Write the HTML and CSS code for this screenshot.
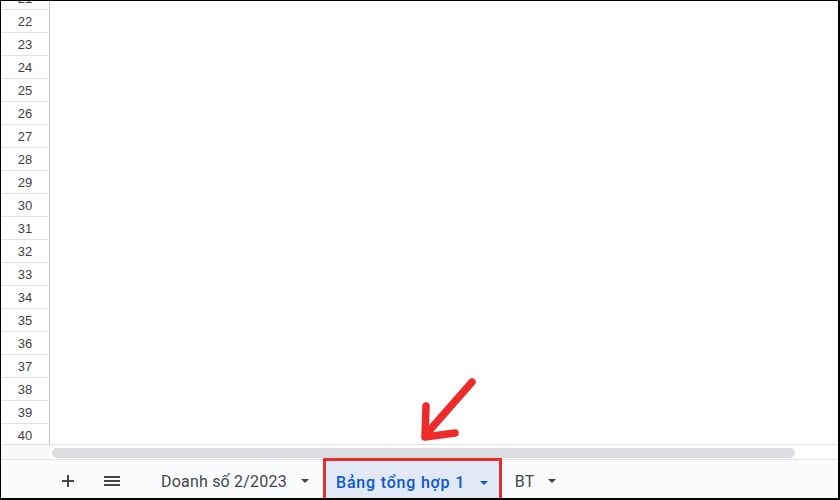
FILE: index.html
```html
<!DOCTYPE html>
<html lang="vi">
<head>
  <meta charset="UTF-8">
  <title>Bảng tính</title>
  <link rel="stylesheet" href="styles.css">
</head>
<body>

<div class="frame">
  <!-- Vùng lưới -->
  <div class="grid">
    <div class="rows">
      <div class="row"><span class="num">21</span><span class="cell"></span></div>
      <div class="row"><span class="num">22</span><span class="cell"></span></div>
      <div class="row"><span class="num">23</span><span class="cell"></span></div>
      <div class="row"><span class="num">24</span><span class="cell"></span></div>
      <div class="row"><span class="num">25</span><span class="cell"></span></div>
      <div class="row"><span class="num">26</span><span class="cell"></span></div>
      <div class="row"><span class="num">27</span><span class="cell"></span></div>
      <div class="row"><span class="num">28</span><span class="cell"></span></div>
      <div class="row"><span class="num">29</span><span class="cell"></span></div>
      <div class="row"><span class="num">30</span><span class="cell"></span></div>
      <div class="row"><span class="num">31</span><span class="cell"></span></div>
      <div class="row"><span class="num">32</span><span class="cell"></span></div>
      <div class="row"><span class="num">33</span><span class="cell"></span></div>
      <div class="row"><span class="num">34</span><span class="cell"></span></div>
      <div class="row"><span class="num">35</span><span class="cell"></span></div>
      <div class="row"><span class="num">36</span><span class="cell"></span></div>
      <div class="row"><span class="num">37</span><span class="cell"></span></div>
      <div class="row"><span class="num">38</span><span class="cell"></span></div>
      <div class="row"><span class="num">39</span><span class="cell"></span></div>
      <div class="row"><span class="num">40</span><span class="cell"></span></div>
    </div>
  </div>

  <!-- Thanh cuộn ngang -->
  <div class="hscroll">
    <div class="corner"></div>
    <div class="track"><div class="thumb"></div></div>
  </div>

  <!-- Thanh trang tính -->
  <div class="tabbar">
    <span class="icon-btn">
      <svg width="14" height="14" viewBox="0 0 14 14"><path d="M7 1v12M1 7h12" stroke="#444746" stroke-width="2"/></svg>
    </span>
    <span class="icon-btn">
      <svg width="18" height="14" viewBox="0 0 18 14"><path d="M1 3h16M1 7h16M1 11h16" stroke="#444746" stroke-width="2"/></svg>
    </span>
    <span class="tab">Doanh số 2/2023 <i class="caret"></i></span>
    <span class="tab active">Bảng tổng hợp 1 <i class="caret"></i></span>
    <span class="tab">BT <i class="caret"></i></span>
  </div>

  <!-- Mũi tên chỉ dẫn -->
  <svg class="pointer" width="70" height="70" viewBox="0 0 70 70">
    <path d="M57 8L14 57" stroke="#ee2b2b" stroke-width="7.5" stroke-linecap="round"/>
    <path d="M11 32L10 63L40 59" fill="none" stroke="#ee2b2b" stroke-width="7.5" stroke-linecap="round" stroke-linejoin="round"/>
  </svg>
</div>

</body>
</html>
```

FILE: styles.css
```css
body {
  margin: 0;
  background-color: #000;
  font-family: Roboto, Arial, sans-serif;
}

.frame {
  position: relative;
  margin: 1px 2px 2px 1px;
  height: 497px;
  background-color: #fff;
  display: flex;
  flex-direction: column;
  overflow: hidden;
}

/* Lưới */
.grid {
  height: 443px;
  overflow: hidden;
}

.rows {
  margin-top: -14px;
}

.row {
  display: flex;
  height: 23px;
}

.num {
  width: 48px;
  border-right: 1px solid #c4c7c5;
  border-bottom: 1px solid #e1e1e1;
  color: #3f3f3f;
  font-family: Arial, "Liberation Sans", sans-serif;
  font-size: 13px;
  display: flex;
  align-items: center;
  justify-content: center;
}

.cell {
  flex: 1;
}

/* Thanh cuộn */
.hscroll {
  display: flex;
  height: 14px;
  border-top: 1px solid #e1e3e1;
}

.corner {
  width: 49px;
  background-color: #f8f9fa;
}

.track {
  flex: 1;
  padding: 3px 0 1px 2px;
}

.thumb {
  width: 743px;
  height: 10px;
  border-radius: 5px;
  background-color: #dadce0;
}

/* Thanh trang tính */
.tabbar {
  flex: 1;
  display: flex;
  align-items: stretch;
  background-color: #f9fbfd;
  border-top: 1px solid #e1e3e1;
  padding-left: 51px;
}

.icon-btn {
  width: 32px;
  display: flex;
  align-items: center;
  justify-content: center;
  margin-right: 12px;
  padding-top: 4px;
}

.icon-btn + .icon-btn {
  margin-right: 20px;
}

.tab {
  display: flex;
  align-items: center;
  padding: 4px 14px 0 13px;
  color: #444746;
  font-size: 16px;
  letter-spacing: 0.2px;
  white-space: pre;
}

.tab.active {
  margin-top: -2px;
  padding: 6px 11px 0 10px;
  border: 3px solid #e3302f;
  border-bottom: none;
  background-color: #e1e9f7;
  color: #0b57d0;
  font-weight: 500;
  letter-spacing: 0.8px;
}

.caret {
  display: inline-block;
  margin-left: 10px;
  border-left: 4px solid transparent;
  border-right: 4px solid transparent;
  border-top: 4px solid #444746;
}

.tab.active .caret {
  border-top-color: #0b57d0;
}

/* Mũi tên */
.pointer {
  position: absolute;
  left: 414px;
  top: 373px;
}
```
